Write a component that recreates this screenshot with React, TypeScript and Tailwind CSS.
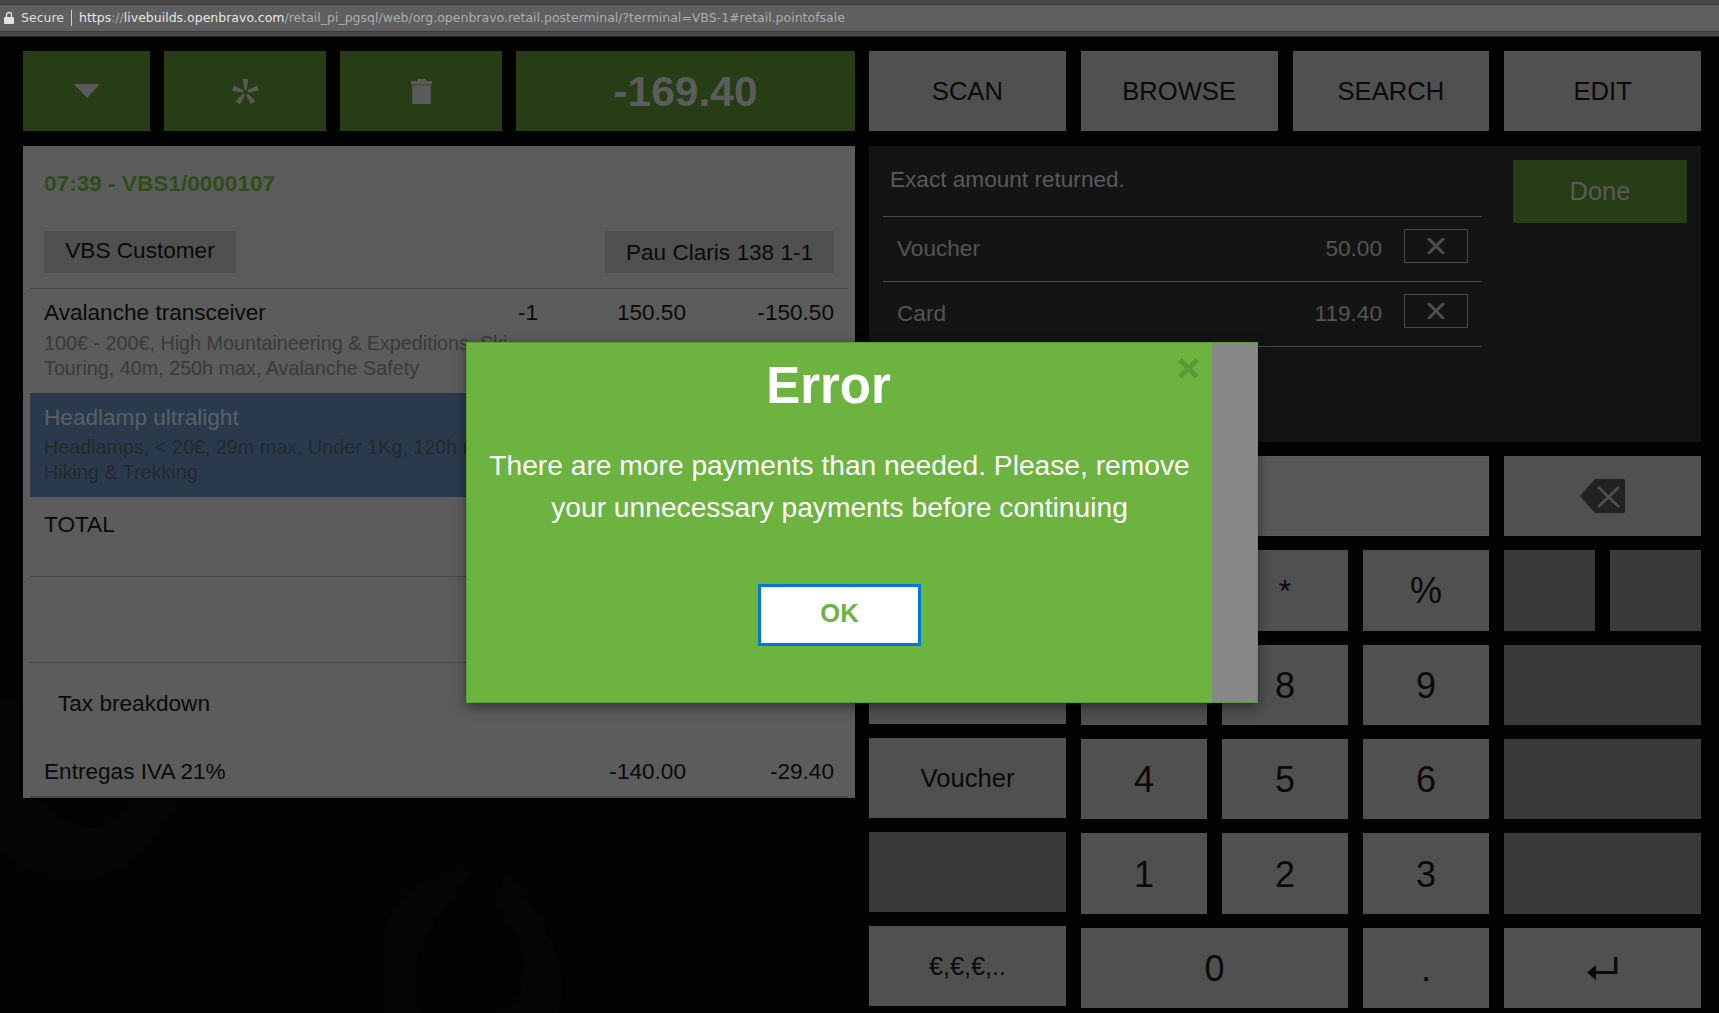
const keys = [
  ['7', '8', '9'],
  ['4', '5', '6'],
  ['1', '2', '3'],
];

function KeyButton({ label, className = '' }: { label?: string; className?: string }) {
  return (
    <div className={`flex items-center justify-center bg-[#505050] text-[#0a0a0a] ${className}`}>
      {label}
    </div>
  );
}

function BackgroundLogo() {
  return (
    <svg className="absolute inset-0 h-[1013px] w-[1719px]" viewBox="0 0 1719 1013" fill="none">
      <path
        d="M384 1013V950c0-40 20-75 90-82-20 30-60 70-60 115 0 15 3 25 6 30zM505 875c30 30 57 70 57 115 0 10-1 17-3 23H500c20-10 24-30 24-50 0-25-14-35-30-62z"
        fill="#050505"
      />
      <path
        d="M0 700h200c-5 90-50 180-125 180-35 0-60-15-75-30zM20 760c10 40 45 68 70 68 25 0 50-30 55-68z"
        fill="#050505"
        fillRule="evenodd"
      />
    </svg>
  );
}

function PaymentRow({ label, amount }: { label: string; amount: string }) {
  return (
    <div className="flex h-[65px] items-start border-b border-[#4a4a4a] pl-[14px] pr-[14px] pt-[12px]">
      <span className="mt-[5px] flex-1 leading-[30px] text-[#555555]">{label}</span>
      <span className="mt-[5px] leading-[30px] text-[#555555]">{amount}</span>
      <div className="ml-[22px] flex h-[34px] w-[64px] items-center justify-center border border-[#4a4a4a]">
        <svg className="h-[16px] w-[18px]" viewBox="0 0 18 16" stroke="#4e4e4e" strokeWidth="3">
          <path d="M1 0L17 16M17 0L1 16" />
        </svg>
      </div>
    </div>
  );
}

function ReceiptLine({
  title,
  desc,
  qty,
  price,
  total,
  selected,
}: {
  title: string;
  desc: string;
  qty?: string;
  price?: string;
  total?: string;
  selected?: boolean;
}) {
  return (
    <div className={`h-[104px] px-[14px] ${selected ? 'bg-[#2a3a4c] pt-[12px]' : 'pt-[11px]'}`}>
      <div className={`flex leading-[26px] ${selected ? 'text-[#5a6066]' : 'text-[#0a0a0a]'}`}>
        <span className="flex-1">{title}</span>
        <span className="w-[70px] text-right">{qty}</span>
        <span className="w-[148px] text-right">{price}</span>
        <span className="w-[148px] text-right">{total}</span>
      </div>
      <p className={`w-[470px] text-[19.75px] leading-[25px] ${selected ? 'mt-[4px] text-[#24282c]' : 'mt-[5px] text-[#3a3a3a]'}`}>
        {desc}
      </p>
    </div>
  );
}

export default function App() {
  return (
    <div className="relative h-[1013px] w-[1719px] overflow-hidden bg-[#030303] font-['Liberation_Sans',sans-serif] text-[22.6px]">
      <BackgroundLogo />

      {/* Browser bar */}
      <header className="relative h-[37px] border-b border-[#2a2a2a] bg-[#484848] pt-[4px]">
        <div className="flex h-[28px] items-center border-y border-[#3a3a3a] bg-[#5f5f5f] pl-[4px] font-['DejaVu_Sans',sans-serif] text-[12.5px] text-[#c8c8c8]">
          <svg className="h-[14px] w-[10px]" viewBox="0 0 10 14" fill="#e2e2e2">
            <path d="M1 6h8a1 1 0 011 1v5a1 1 0 01-1 1H1a1 1 0 01-1-1V7a1 1 0 011-1z" />
            <path d="M2.5 6V4a2.5 2.5 0 015 0v2" fill="none" stroke="#e2e2e2" strokeWidth="1.3" />
          </svg>
          <span className="ml-[7px] text-[#dddddd]">Secure</span>
          <span className="ml-[7px] mr-[7px] h-[16px] w-px bg-[#d0d0d0]" />
          <span className="text-[#e6e6e6]">https</span>
          <span className="text-[#a8a8a8]">://</span>
          <span className="text-[#e6e6e6]">livebuilds.openbravo.com</span>
          <span className="text-[#aeaeae]">
            /retail_pi_pgsql/web/org.openbravo.retail.posterminal/?terminal=VBS-1#retail.pointofsale
          </span>
        </div>
      </header>

      <main className="relative flex gap-[14px] pl-[23px] pt-[14px]">
        {/* Left column */}
        <section className="w-[832px]">
          <div className="flex h-[80px] gap-[14px] text-[#5c5c5c]">
            <div className="flex w-[127px] items-center justify-center bg-[#263d16]">
              <svg className="h-[14px] w-[26px]" viewBox="0 0 26 14" fill="#5a5a5a">
                <path d="M0 0h26L13 14z" />
              </svg>
            </div>
            <div className="flex w-[162px] items-center justify-center bg-[#263d16]">
              <svg className="h-[25px] w-[27px]" viewBox="0 0 27 25" fill="#5a5a5a">
                {[0, 72, 144, 216, 288].map((angle) => (
                  <path key={angle} d="M12.3 10.8L10.8 0h5.4l-1.5 10.8z" transform={`rotate(${angle} 13.5 13.2)`} />
                ))}
              </svg>
            </div>
            <div className="flex w-[162px] items-center justify-center bg-[#263d16]">
              <svg className="h-[25px] w-[21px]" viewBox="0 0 21 25" fill="#5a5a5a">
                <path d="M6 0h9v2h6v3.6H0V2h6zM1.2 6.2h18.6V25H1.2z" />
              </svg>
            </div>
            <div className="flex flex-1 items-center justify-center bg-[#263d16] pt-[2px] text-[42.6px] font-bold">
              -169.40
            </div>
          </div>

          <div className="mt-[15px] h-[652px] bg-[#5c5c5c] px-[7px]">
            <div className="h-[143px] border-b border-[#484848] px-[14px] pt-[25px]">
              <h1 className="font-bold leading-[26px] text-[#2f4d1b]">07:39 - VBS1/0000107</h1>
              <div className="mt-[34px] flex justify-between text-[#0a0a0a]">
                <div className="flex h-[42px] w-[192px] items-center justify-center bg-[#505050] pb-[2px]">
                  VBS Customer
                </div>
                <div className="flex h-[42px] w-[229px] items-center justify-center bg-[#505050] pt-[2px]">
                  Pau Claris 138 1-1
                </div>
              </div>
            </div>

            <ReceiptLine
              title="Avalanche transceiver"
              desc="100€ - 200€, High Mountaineering & Expeditions, Ski Touring, 40m, 250h max, Avalanche Safety"
              qty="-1"
              price="150.50"
              total="-150.50"
            />
            <ReceiptLine
              title="Headlamp ultralight"
              desc="Headlamps, < 20€, 29m max, Under 1Kg, 120h max, Hiking & Trekking"
              selected
            />

            <div className="h-[80px] border-b border-[#484848] px-[14px] pt-[15px] leading-[26px] text-[#0a0a0a]">TOTAL</div>
            <div className="h-[86px] border-b border-[#484848]" />
            <div className="h-[135px] border-b-2 border-[#484848] text-[#0a0a0a]">
              <div className="pl-[28px] pt-[28px] leading-[26px]">Tax breakdown</div>
              <div className="mt-[42px] flex px-[14px] leading-[26px]">
                <span className="flex-1">Entregas IVA 21%</span>
                <span className="w-[148px] text-right">-140.00</span>
                <span className="w-[148px] text-right">-29.40</span>
              </div>
            </div>
          </div>
        </section>

        {/* Right column */}
        <section className="w-[832px]">
          <div className="grid h-[80px] grid-cols-4 gap-[15px] text-[25.6px] text-[#0a0a0a]">
            <KeyButton label="SCAN" />
            <KeyButton label="BROWSE" />
            <KeyButton label="SEARCH" />
            <KeyButton label="EDIT" />
          </div>

          <div className="mt-[15px] flex h-[296px] bg-[#141414] pl-[14px]">
            <div className="w-[599px]">
              <div className="h-[71px] border-b border-[#4a4a4a] pl-[7px] pt-[19px] leading-[30px] text-[#5a5a5a]">
                Exact amount returned.
              </div>
              <PaymentRow label="Voucher" amount="50.00" />
              <PaymentRow label="Card" amount="119.40" />
            </div>
            <div className="ml-[31px] mt-[14px] flex h-[63px] w-[174px] items-center justify-center bg-[#263d16] text-[25.6px] text-[#5a5a5a]">
              Done
            </div>
          </div>

          <div className="mt-[14px] flex h-[80px] gap-[15px]">
            <div className="w-[620px] border border-[#5e5e5e] bg-[#585858]" />
            <div className="flex flex-1 items-center justify-center bg-[#505050]">
              <svg className="h-[34px] w-[45px]" viewBox="0 0 45 34">
                <path d="M15 0h28a2 2 0 012 2v30a2 2 0 01-2 2H15L0 17z" fill="#222222" />
                <path d="M18 8l21 20M39 8L18 28" stroke="#505050" strokeWidth="2.6" />
              </svg>
            </div>
          </div>

          <div className="mt-[14px] flex gap-[15px] text-[#0a0a0a]">
            <div className="flex w-[197px] flex-col gap-[14px]">
              <KeyButton className="h-[81px]" />
              <KeyButton className="h-[79px]" />
              <KeyButton label="Voucher" className="h-[80px] text-[25.6px]" />
              <div className="h-[80px] bg-[#3a3a3a]" />
              <KeyButton label="€,€,€,.." className="h-[80px] pt-[2px] text-[25.2px]" />
            </div>

            <div className="grid flex-1 grid-cols-[126px_126px_126px_91px_91px] grid-rows-[81px_80px_80px_81px_80px] gap-x-[15px] gap-y-[14px] text-[36px]">
              <KeyButton label="/" />
              <KeyButton label="*" className="text-[32px]" />
              <KeyButton label="%" />
              <div className="bg-[#3a3a3a]" />
              <div className="bg-[#3a3a3a]" />
              {keys.map((row) => (
                <div key={row[0]} className="contents">
                  {row.map((key) => (
                    <KeyButton key={key} label={key} className="pt-[2px]" />
                  ))}
                  <div className="col-span-2 bg-[#3a3a3a]" />
                </div>
              ))}
              <KeyButton label="0" className="col-span-2 pt-[2px]" />
              <KeyButton label="." className="pt-[2px]" />
              <div className="col-span-2 flex items-center justify-center bg-[#505050]">
                <svg className="h-[23px] w-[32px]" viewBox="0 0 32 23" fill="#0a0a0a">
                  <path d="M27 0h3.4v17H8v-3h19z" />
                  <path d="M0 15.5L9 8v15z" />
                </svg>
              </div>
            </div>
          </div>
        </section>
      </main>

      {/* Error dialog */}
      <div className="absolute left-[466px] top-[342px] flex h-[361px] w-[792px] border border-[#5c9c34] bg-[#6cb33f] shadow-[0_4px_12px_rgba(0,0,0,0.45)]">
        <div className="relative flex-1 text-center text-white">
          <h2 className="pr-[22px] pt-[14px] text-[51px] font-bold leading-[58px]">Error</h2>
          <svg className="absolute right-[13px] top-[15px] h-[21px] w-[21px]" viewBox="0 0 21 21" stroke="#5a9a35" strokeWidth="5">
            <path d="M2 2l17 17M19 2L2 19" />
          </svg>
          <p className="mx-auto mt-[29px] w-[720px] text-[28.2px] leading-[42px]">
            There are more payments than needed. Please, remove your unnecessary payments before continuing
          </p>
          <button className="mt-[56px] h-[62px] w-[163px] border-[3px] border-[#0078d7] bg-white pb-[3px] text-[25.6px] font-bold text-[#6cb33f]">
            OK
          </button>
        </div>
        <div className="w-[45px] bg-[#888888]" />
      </div>
    </div>
  );
}
